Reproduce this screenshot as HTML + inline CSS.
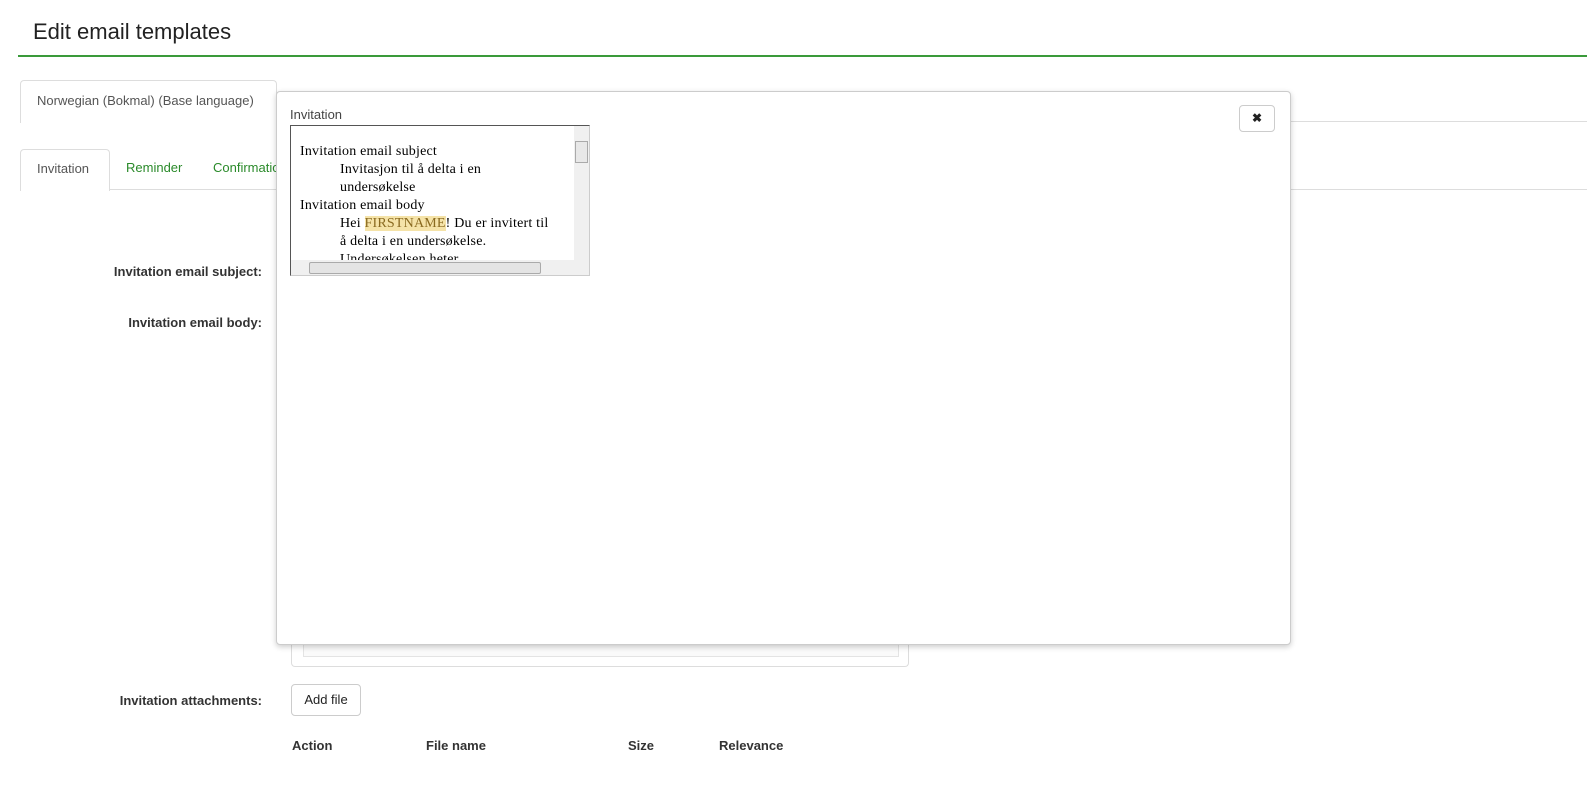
<!DOCTYPE html>
<html><head><style>
body{margin:0;width:1587px;height:785px;background:#fff;font-family:"Liberation Sans",sans-serif;position:relative;overflow:hidden;color:#333}
.a{position:absolute}
.lbl{font-size:13px;font-weight:bold;color:#333;text-align:right;width:262px;left:0}
.h{font-size:13px;font-weight:bold;color:#333}
</style></head><body>
<div class="a" style="left:33px;top:19px;font-size:22px;color:#222">Edit email templates</div>
<div class="a" style="left:18px;top:55px;width:1569px;height:2px;background:#3a9a3a"></div>

<div class="a" style="left:20px;top:80px;width:255px;height:42px;border:1px solid #ddd;border-bottom:none;border-radius:4px 4px 0 0;background:#fff"></div>
<div class="a" style="left:37px;top:93px;font-size:13px;color:#555">Norwegian (Bokmal) (Base language)</div>
<div class="a" style="left:276px;top:121px;width:1311px;height:1px;background:#ddd"></div>

<div class="a" style="left:20px;top:149px;width:88px;height:41px;border:1px solid #ddd;border-bottom:none;border-radius:4px 4px 0 0;background:#fff"></div>
<div class="a" style="left:37px;top:161px;font-size:13px;color:#555">Invitation</div>
<div class="a" style="left:126px;top:160px;font-size:13px;color:#2a8a2a">Reminder</div>
<div class="a" style="left:213px;top:160px;font-size:13px;color:#2a8a2a">Confirmation</div>
<div class="a" style="left:109px;top:189px;width:1478px;height:1px;background:#ddd"></div>

<div class="a lbl" style="top:264px">Invitation email subject:</div>
<div class="a lbl" style="top:315px">Invitation email body:</div>

<div class="a" style="left:291px;top:600px;width:616px;height:66px;border:1px solid #ddd;border-top:none;border-radius:0 0 4px 4px"></div>
<div class="a" style="left:303px;top:600px;width:594px;height:56px;border:1px solid #e4e4e4;border-top:none;background:#fafafa"></div>

<div class="a lbl" style="top:693px">Invitation attachments:</div>
<div class="a" style="left:291px;top:684px;width:70px;height:32px;border:1px solid #ccc;border-radius:4px;box-sizing:border-box;font-size:13px;color:#222;text-align:center;line-height:30px">Add file</div>
<div class="a h" style="left:292px;top:738px">Action</div>
<div class="a h" style="left:426px;top:738px">File name</div>
<div class="a h" style="left:628px;top:738px">Size</div>
<div class="a h" style="left:719px;top:738px">Relevance</div>

<div class="a" style="left:276px;top:91px;width:1013px;height:552px;background:#fff;border:1px solid #ccc;border-radius:4px;box-shadow:0 2px 6px rgba(0,0,0,.2)">
 <div class="a" style="left:13px;top:15px;font-size:13px;color:#444">Invitation</div>
 <div class="a" style="left:962px;top:13px;width:36px;height:27px;border:1px solid #ccc;border-radius:4px;box-sizing:border-box;text-align:center;line-height:25px;font-size:12px;font-weight:bold;color:#222">✖</div>
 <div class="a" style="left:13px;top:33px;width:300px;height:151px;border:1px solid #555;border-right-color:#ccc;border-bottom-color:#ccc;box-sizing:border-box;overflow:hidden;font-family:'Liberation Serif',serif;font-size:14px;color:#000;line-height:18px">
  <div style="padding:17px 0 0 9px;width:250px;letter-spacing:0.2px">
   Invitation email subject<br>
   <div style="padding-left:40px">Invitasjon til å delta i en undersøkelse</div>
   Invitation email body<br>
   <div style="padding-left:40px">Hei <span style="background:#f5e3a8;color:#8a6a20">FIRSTNAME</span>! Du er invitert til å delta i en undersøkelse.<br>Undersøkelsen heter</div>
  </div>
  <div class="a" style="right:0;top:0;width:15px;height:134px;background:#f0f0f0"><div style="margin:15px 1px;height:20px;border:1px solid #aaa;background:#e8e8e8"></div></div>
  <div class="a" style="left:0;bottom:0;width:298px;height:15px;background:#f0f0f0"><div style="margin:2px 0 0 18px;width:230px;height:10px;border:1px solid #aaa;border-radius:2px;background:#e4e4e4"></div></div>
 </div>
</div>
</body></html>
